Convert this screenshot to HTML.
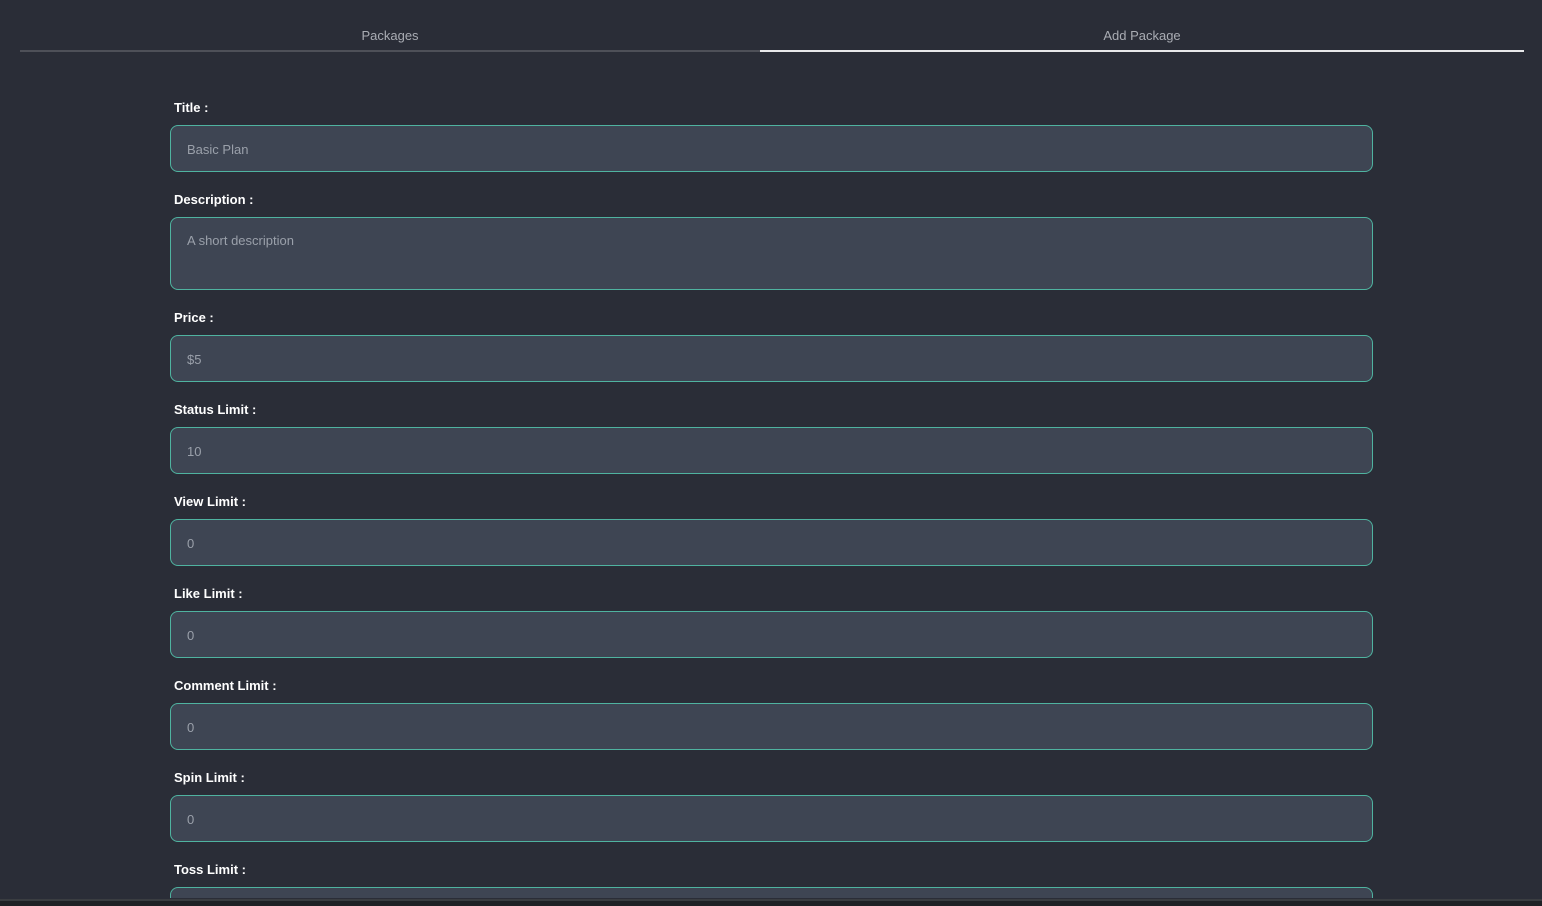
<!DOCTYPE html><html style="overflow:hidden;height:906px"><head><style>
html,body{margin:0;height:906px;overflow:hidden}
body{background:#2a2d37;width:1542px;font-family:"Liberation Sans",sans-serif;position:relative}
.tab{position:absolute;top:28px;font-size:13px;color:#a9acb3;text-align:center}
.ul{position:absolute;top:50px;height:2px}
.lab{position:absolute;left:174px;font-size:13px;font-weight:bold;color:#fff}
.in{position:absolute;left:170px;width:1201px;height:45px;border:1px solid #4fb3a0;border-radius:8px;background:#3e4553}
.in span{position:absolute;left:16px;top:16px;font-size:13px;color:#9aa0aa}
.bot{position:absolute;left:0;top:899px;width:1542px;height:5px;background:#1f2125;border-top:2px solid #3a3d41}
</style></head><body>
<div class="tab" style="left:20px;width:740px">Packages</div>
<div class="tab" style="left:760px;width:764px">Add Package</div>
<div class="ul" style="left:20px;width:740px;background:#4e5058"></div>
<div class="ul" style="left:760px;width:764px;background:#e8e8ea"></div>
<div class="lab" style="top:100px">Title :</div>
<div class="in" style="top:125px"><span>Basic Plan</span></div>
<div class="lab" style="top:192px">Description :</div>
<div class="in" style="top:217px;height:71px"><span style="top:15px">A short description</span></div>
<div class="lab" style="top:310px">Price :</div>
<div class="in" style="top:335px"><span>$5</span></div>
<div class="lab" style="top:402px">Status Limit :</div>
<div class="in" style="top:427px"><span>10</span></div>
<div class="lab" style="top:494px">View Limit :</div>
<div class="in" style="top:519px"><span>0</span></div>
<div class="lab" style="top:586px">Like Limit :</div>
<div class="in" style="top:611px"><span>0</span></div>
<div class="lab" style="top:678px">Comment Limit :</div>
<div class="in" style="top:703px"><span>0</span></div>
<div class="lab" style="top:770px">Spin Limit :</div>
<div class="in" style="top:795px"><span>0</span></div>
<div class="lab" style="top:862px">Toss Limit :</div>
<div class="in" style="top:887px;height:10px;border-bottom:none;border-radius:8px 8px 0 0"></div>
<div class="bot"></div>
</body></html>
